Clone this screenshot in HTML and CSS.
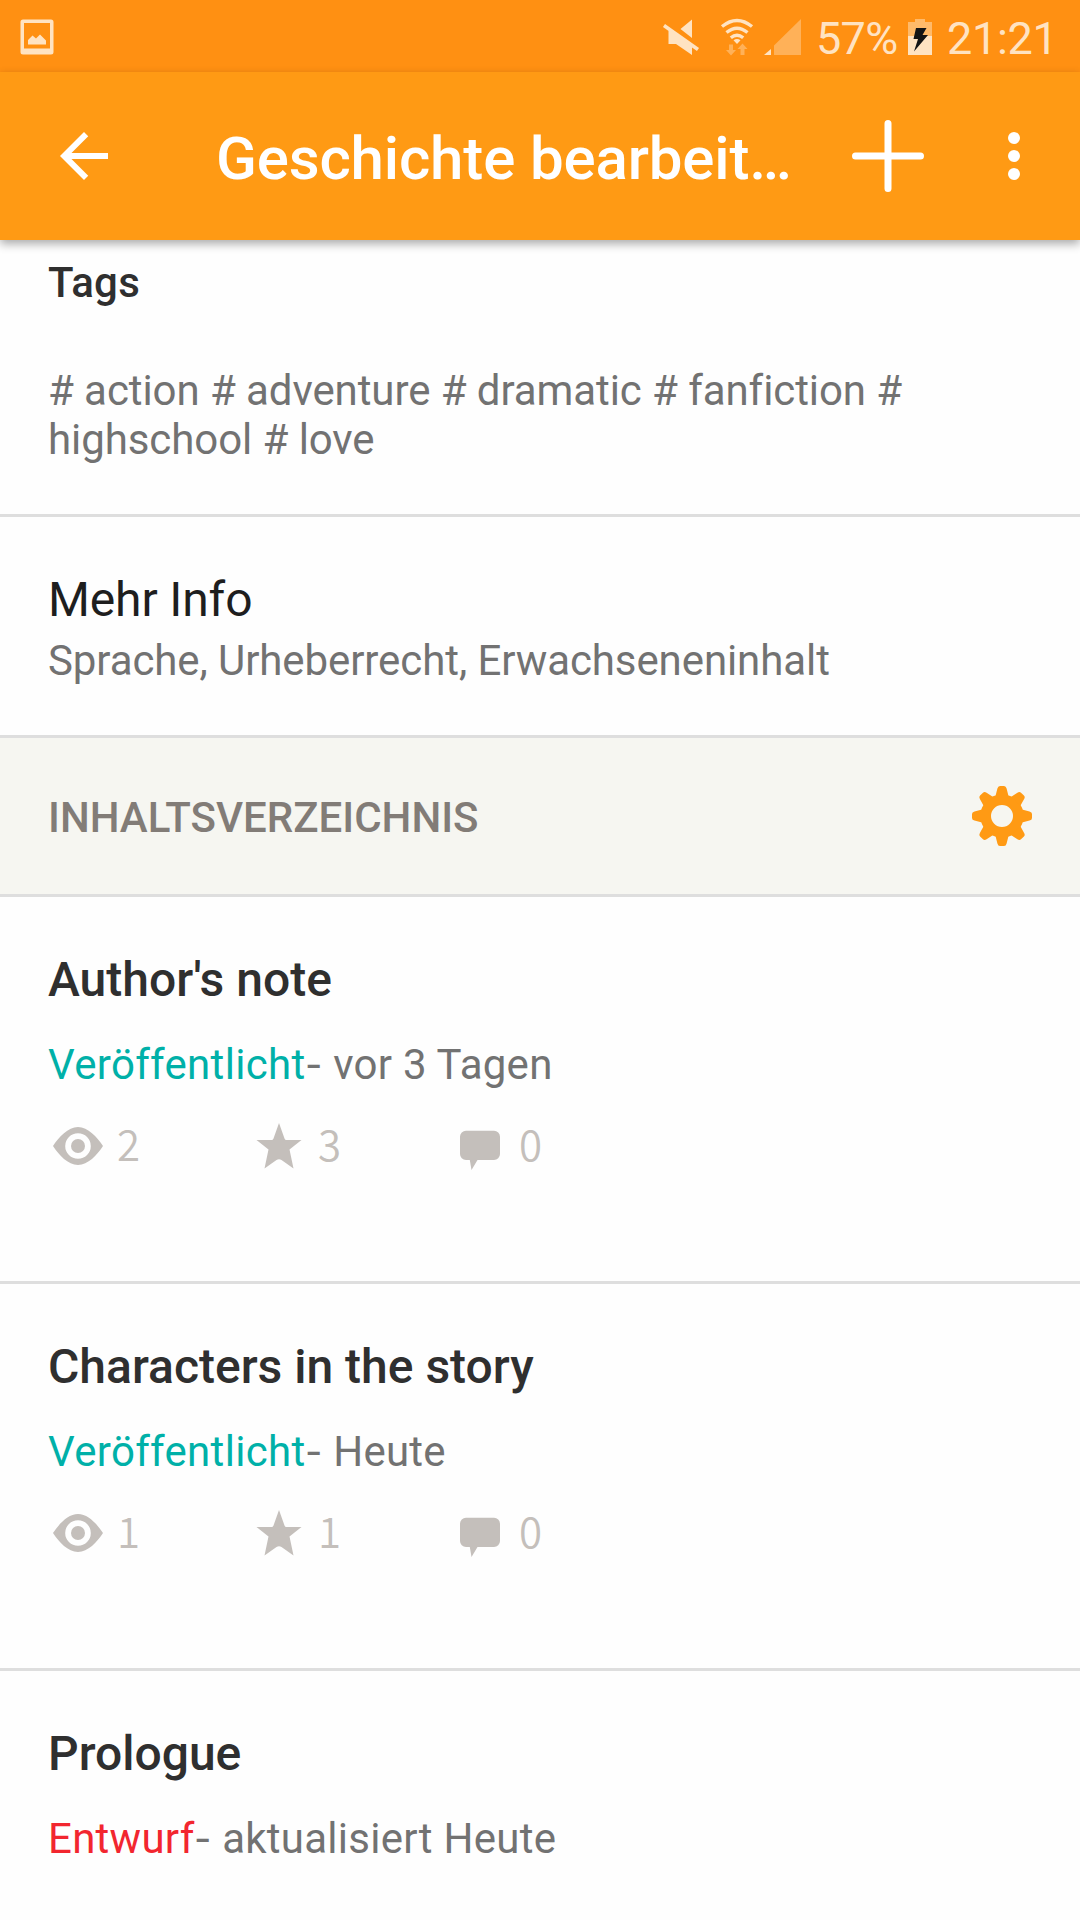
FILE: index.html
```
<!DOCTYPE html>
<html lang="de">
  <head>
    <meta charset="UTF-8" />
    <meta name="viewport" content="width=device-width, initial-scale=1.0" />
    <title>Geschichte bearbeiten</title>
    <link rel="stylesheet" href="styles.css">
  </head>
  <body>
    <!-- shared icons for the chapter stats -->
    <svg class="sprite" width="0" height="0">
      <symbol id="icon-eye" viewBox="0 0 60 60">
        <path fill-rule="evenodd" d="M5 30C11 21 20 11 30 11S49 21 55 30C49 39 40 49 30 49S11 39 5 30ZM30 17.200a12.800 12.800 0 1 0 0 25.600a12.800 12.800 0 1 0 0-25.600Z" />
        <circle cx="30" cy="30" r="7" />
      </symbol>
      <symbol id="icon-star" viewBox="0 0 60 60">
        <path d="M30 7L35.500 22.500Q36 24 37.500 24H52.500L40.500 33.500L44.500 52.500L32.500 44Q30 42.500 27.500 44L15.500 52.500L19.500 33.500L7.500 24H22.500Q24 24 24.500 22.500Z" />
      </symbol>
      <symbol id="icon-comment" viewBox="0 0 60 60">
        <path d="M16 14.800H44a6 6 0 0 1 6 6V38a6 6 0 0 1-6 6H27.500L21.500 54L19.800 44H16a6 6 0 0 1-6-6V20.800a6 6 0 0 1 6-6Z" />
      </symbol>
    </svg>

    <div class="status-bar">
      <svg class="icon-gallery" width="34" height="36" viewBox="0 0 34 36">
        <path fill-rule="evenodd" d="M3 .500H31a2.500 2.500 0 0 1 2.500 2.500V33a2.500 2.500 0 0 1-2.500 2.500H3A2.500 2.500 0 0 1 .500 33V3A2.500 2.500 0 0 1 3 .500ZM4 4V29.500H30V4Z" />
        <path d="M8 25.500V21L12.500 16.500L16 19.500L20 15.500L26 21.500V25.500Z" />
      </svg>
      <div class="status-icons">
        <svg class="icon-mute" width="38" height="38" viewBox="0 0 38 38">
          <path d="M18.500 11L30 1.500V20ZM6.500 13H10L30 27V37L14 26H6.500Z" />
          <path d="M2 7.500L36 31.500" stroke="#ffe3c2" stroke-width="3.600" />
        </svg>
        <svg class="icon-wifi" width="34" height="38" viewBox="0 0 34 38">
          <g fill="none" stroke="#ffe3c2" stroke-width="3.400">
            <path d="M2 8.500Q17 -3.500 32 8.500" />
            <path d="M6.500 14.500Q17 5.800 27.500 14.500" />
            <path d="M10.800 19.800Q17 14.600 23.200 19.800" />
          </g>
          <path d="M13.500 22.300Q17 19.500 20.500 22.300L17 26Z" />
          <g opacity=".4">
            <path d="M9 26.500H13V32H16L11 37.500L6 32H9Z" />
            <path d="M20.500 37V31H17.500L22.500 25.500L27.500 31H24.500V37Z" />
          </g>
        </svg>
        <svg class="icon-signal" width="38" height="38" viewBox="0 0 38 38">
          <path d="M0 37L7 31V37Z" />
          <path opacity=".4" d="M10 37V27.500L37 1V37Z" />
        </svg>
        <span class="battery-level">57%</span>
        <svg class="icon-battery" width="24" height="36" viewBox="0 0 24 36">
          <path opacity=".5" d="M0 3H7V0H17V3H24V17H0Z" />
          <path d="M0 17H24V36H0Z" />
          <path fill="#141414" d="M8 9H18.500L14.500 16H20L6 32.500L10 20H5.500Z" />
        </svg>
        <span class="clock">21:21</span>
      </div>
    </div>

    <div class="toolbar">
      <svg class="back" width="72" height="72" viewBox="0 0 24 24">
        <path d="M20 11H7.830l5.590-5.590L12 4l-8 8 8 8 1.410-1.410L7.830 13H20v-2z" />
      </svg>
      <h1>Geschichte bearbeit…</h1>
      <svg class="add" width="72" height="72" viewBox="0 0 72 72">
        <path d="M36 3.500V68.500M3.500 36H68.500" stroke="#fff" stroke-width="7" stroke-linecap="round" />
      </svg>
      <svg class="more" width="72" height="72" viewBox="0 0 24 24">
        <circle cx="12" cy="6" r="2" />
        <circle cx="12" cy="12" r="2" />
        <circle cx="12" cy="18" r="2" />
      </svg>
    </div>

    <div class="section tags">
      <h2>Tags</h2>
      <p># action # adventure # dramatic # fanfiction # highschool # love</p>
    </div>

    <div class="section info">
      <h3>Mehr Info</h3>
      <p>Sprache, Urheberrecht, Erwachseneninhalt</p>
    </div>

    <div class="section contents">
      <h2>INHALTSVERZEICHNIS</h2>
      <svg class="gear" width="60" height="60" viewBox="-30 -30 60 60">
        <defs>
          <path id="tooth" d="M-6.500 -20L-4.600 -27.500Q-4 -30 -2 -30H2Q4 -30 4.600 -27.500L6.500 -20Z" />
        </defs>
        <circle r="16.300" fill="none" stroke="#ff9a14" stroke-width="10.600" />
        <use href="#tooth" />
        <use href="#tooth" transform="rotate(43)" />
        <use href="#tooth" transform="rotate(90)" />
        <use href="#tooth" transform="rotate(137)" />
        <use href="#tooth" transform="rotate(180)" />
        <use href="#tooth" transform="rotate(223)" />
        <use href="#tooth" transform="rotate(270)" />
        <use href="#tooth" transform="rotate(317)" />
      </svg>
    </div>

    <div class="section chapter">
      <h3>Author's note</h3>
      <p><span class="published">Veröffentlicht</span><span class="dash">-</span> vor 3 Tagen</p>
      <div class="stats">
        <div class="stat"><svg><use href="#icon-eye" /></svg><span>2</span></div>
        <div class="stat"><svg><use href="#icon-star" /></svg><span>3</span></div>
        <div class="stat"><svg><use href="#icon-comment" /></svg><span>0</span></div>
      </div>
    </div>

    <div class="section chapter">
      <h3>Characters in the story</h3>
      <p><span class="published">Veröffentlicht</span><span class="dash">-</span> Heute</p>
      <div class="stats">
        <div class="stat"><svg><use href="#icon-eye" /></svg><span>1</span></div>
        <div class="stat"><svg><use href="#icon-star" /></svg><span>1</span></div>
        <div class="stat"><svg><use href="#icon-comment" /></svg><span>0</span></div>
      </div>
    </div>

    <div class="section chapter last">
      <h3>Prologue</h3>
      <p><span class="draft">Entwurf</span><span class="dash">-</span> aktualisiert Heute</p>
    </div>
  </body>
</html>
```

FILE: styles.css
```
:root {
  --accent-color: #ff9a14;
  --status-color: #ff9012;
  --status-icon-color: #ffe3c2;
  --title-color: #2f2f2f;
  --text-color: #727272;
  --border-color: #dedede;
  --stat-color: #c4bfbb;
}

* {
  box-sizing: border-box;
}

body {
  font-family: Roboto, sans-serif;
  background: #fefefe;
  margin: 0;
  height: 1920px;
  color: var(--text-color);
  overflow: hidden;
}

h1,
h2,
h3,
p {
  margin: 0;
}

svg {
  display: block;
  flex-shrink: 0;
}

.sprite {
  position: absolute;
}

/* Status bar */
.status-bar {
  display: flex;
  justify-content: space-between;
  align-items: center;
  height: 72px;
  padding: 0 22px 0 20px;
  background: var(--status-color);
  color: var(--status-icon-color);
  fill: var(--status-icon-color);
}

.status-icons {
  display: flex;
  align-items: center;
  font-size: 45px;
  line-height: 72px;
}

.icon-gallery {
  margin-top: 2px;
}

.icon-mute,
.icon-wifi,
.icon-signal {
  margin-top: 1px;
}

.icon-wifi {
  margin-left: 20px;
}

.icon-signal {
  margin-left: 10px;
}

.battery-level,
.clock {
  padding-top: 5px;
}

.battery-level {
  width: 92px;
  margin-left: 14px;
  letter-spacing: -0.7px;
}

.icon-battery {
  margin-top: 2px;
}

.clock {
  width: 111px;
  margin-left: 15px;
  letter-spacing: -0.3px;
}

/* Toolbar */
.toolbar {
  display: flex;
  align-items: center;
  height: 168px;
  padding: 0 30px 0 48px;
  background: var(--accent-color);
  box-shadow: 0 4px 9px rgba(0, 0, 0, 0.33);
  fill: #fff;
}

.toolbar h1 {
  width: 636px;
  margin-left: 96px;
  padding-top: 5px;
  color: #fff;
  font-size: 60px;
  font-weight: 500;
  letter-spacing: -0.15px;
  white-space: nowrap;
}

.more {
  margin-left: 54px;
}

/* Sections */
.section {
  padding: 0 48px;
  border-bottom: 3px solid var(--border-color);
  font-size: 42px;
  line-height: 49px;
}

.section h2 {
  font-size: 42px;
  font-weight: 500;
}

.section h3 {
  font-size: 48px;
  line-height: 56px;
  font-weight: 500;
  color: var(--title-color);
}

.tags {
  height: 277px;
  padding-top: 18px;
}

.tags h2 {
  color: var(--title-color);
  letter-spacing: 0.3px;
}

.tags p {
  margin-top: 59px;
  letter-spacing: -0.08px;
}

.info {
  height: 221px;
  padding-top: 55px;
}

.info h3 {
  font-weight: 400;
  letter-spacing: -0.13px;
  color: #1e1e1e;
}

.info p {
  margin-top: 8px;
  letter-spacing: -0.09px;
}

.contents {
  display: flex;
  justify-content: space-between;
  align-items: center;
  height: 159px;
  background: #f6f6f1;
}

.contents h2 {
  padding-top: 3px;
  color: #827c77;
}

.gear {
  fill: var(--accent-color);
}

/* Chapters */
.chapter {
  height: 387px;
  padding-top: 55px;
}

.chapter p {
  margin-top: 32px;
  letter-spacing: 0.27px;
}

.chapter.last {
  height: auto;
  border-bottom: none;
}

.chapter .published {
  color: #00b0a8;
  letter-spacing: 0.32px;
}

.draft {
  color: #f2262f;
}

.dash {
  display: inline-block;
  margin: 0 3px 0 2px;
  transform: scaleX(1.2);
}

.stats {
  display: flex;
  margin-top: 27px;
  color: var(--stat-color);
  fill: var(--stat-color);
}

.stat {
  display: flex;
  align-items: center;
  gap: 9px;
  width: 201px;
  height: 60px;
  font-family: "Noto Sans CJK JP", sans-serif;
  font-weight: 350;
}

.stat span {
  padding-bottom: 8px;
}

.stat svg {
  width: 60px;
  height: 60px;
}
```
